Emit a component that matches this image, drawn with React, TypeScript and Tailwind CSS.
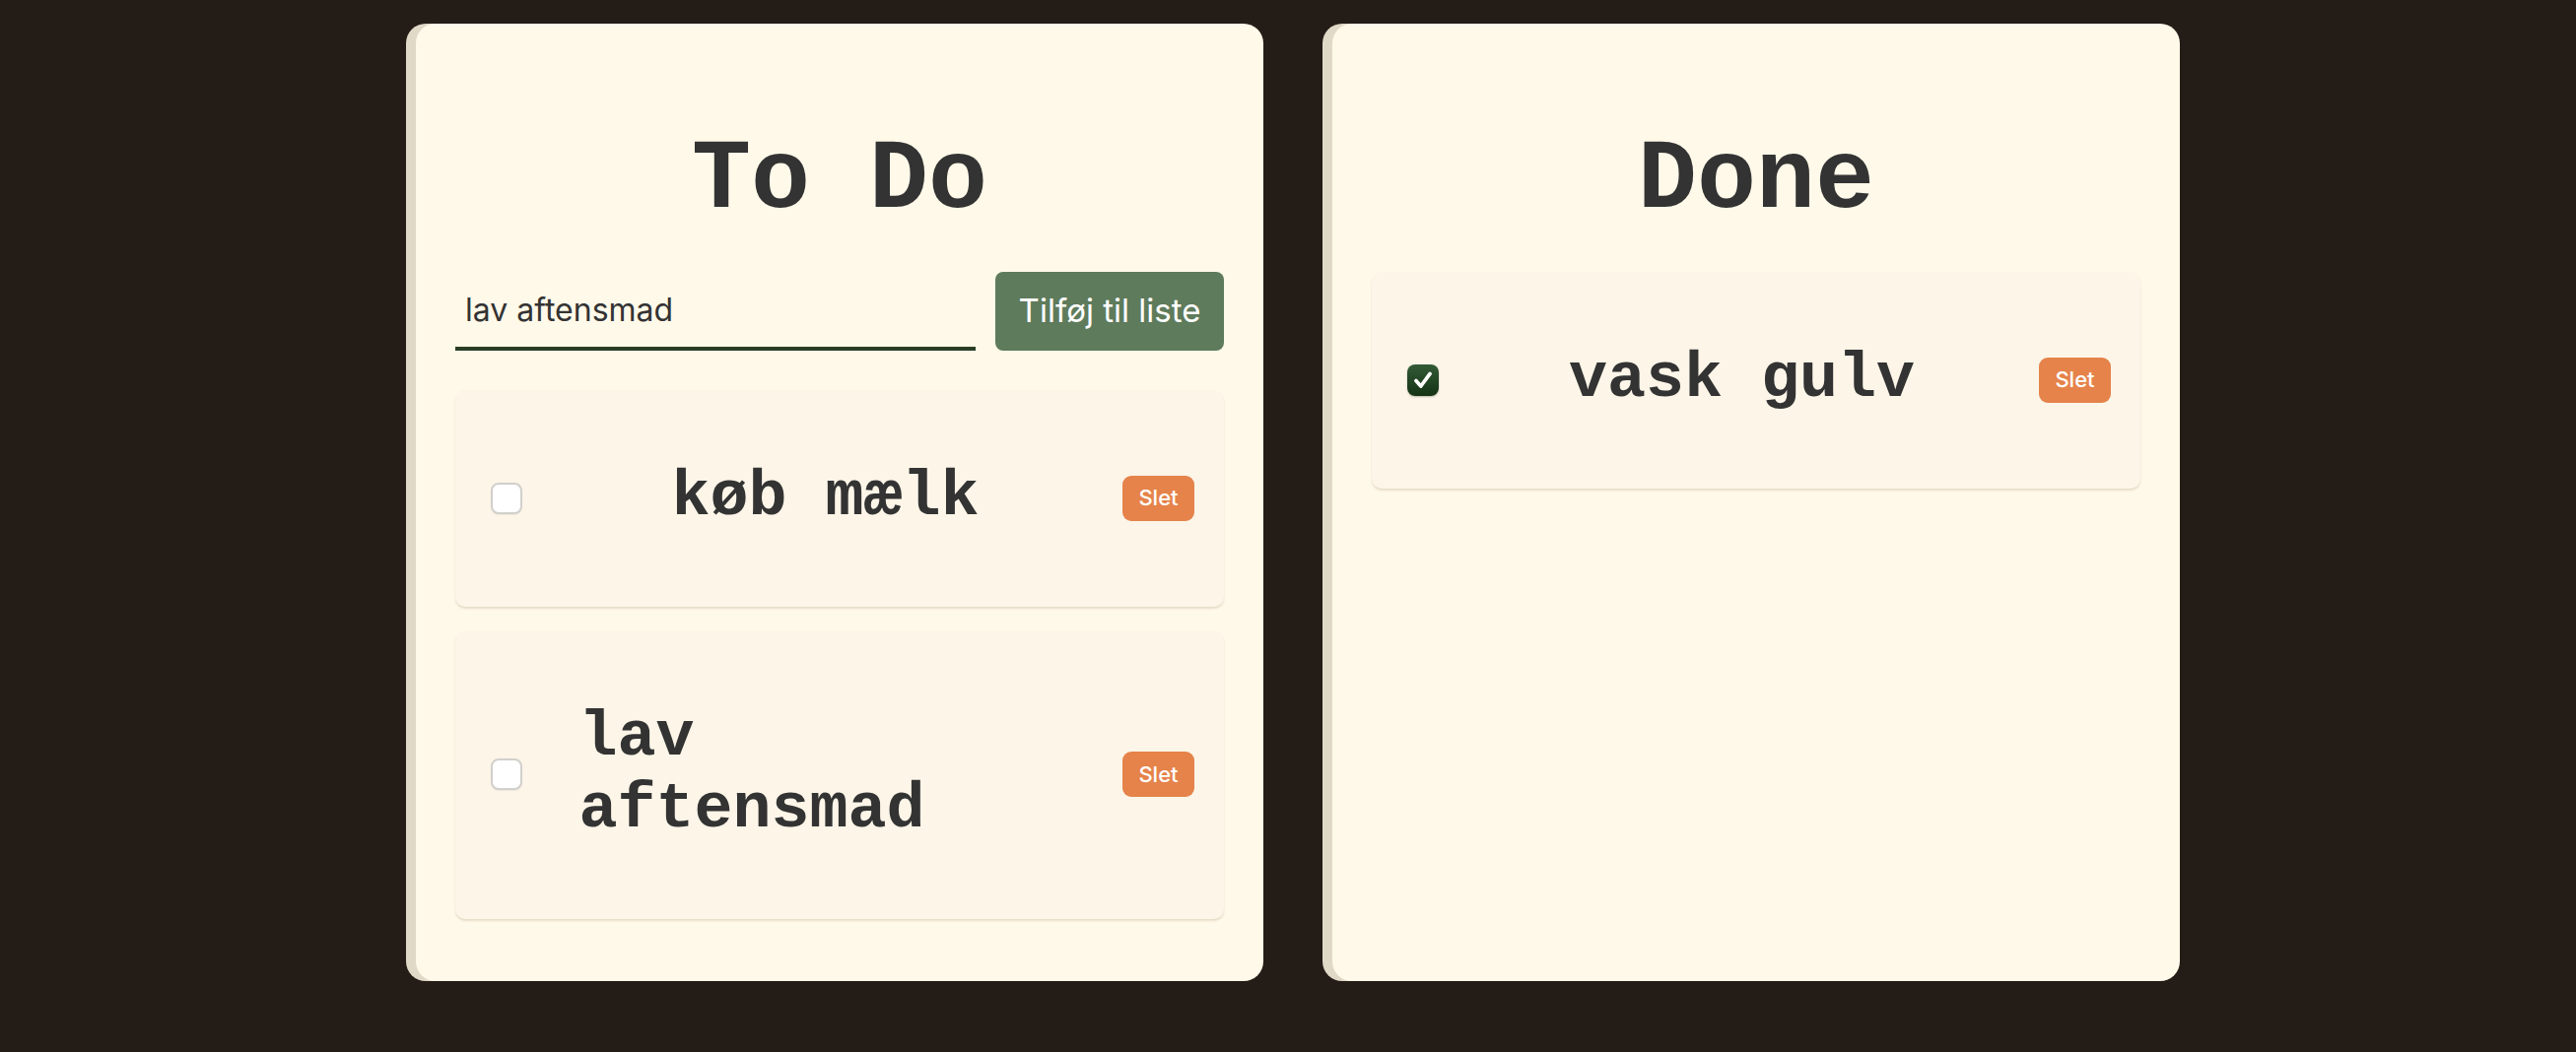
import { useState } from "react";

type Task = { id: number; text: string; done: boolean };

const Checkbox = ({ checked, onChange }: { checked: boolean; onChange: () => void }) => {
  return (
    <button
      onClick={onChange}
      className={`ml-[8px] mr-[6px] flex h-[32px] w-[32px] shrink-0 items-center justify-center rounded-[8px] ${
        checked
          ? "bg-gradient-to-b from-[#335a37] to-[#143414] shadow-[0_1px_2px_rgba(0,0,0,0.25)]"
          : "border-2 border-[#d2d0cc] bg-white shadow-[0_1px_1px_rgba(0,0,0,0.06)]"
      }`}
    >
      {checked && (
        <svg width="24" height="24" viewBox="0 0 22 22" fill="none">
          <path
            d="M4.5 11.5 L9 16.5 L17.5 5"
            stroke="white"
            strokeWidth="3.4"
            strokeLinecap="round"
            strokeLinejoin="round"
          />
        </svg>
      )}
    </button>
  );
};

const TaskItem = ({
  task,
  onToggle,
  onDelete,
}: {
  task: Task;
  onToggle: () => void;
  onDelete: () => void;
}) => {
  return (
    <div className="flex items-center justify-between rounded-[10px] bg-[#fcf5e8] py-[8px] pl-[28px] pr-[30px] shadow-[0_2px_2px_rgba(120,100,60,0.18)]">
      <Checkbox checked={task.done} onChange={onToggle} />
      <p className="my-[65px] max-w-[500px] font-['Courier_New','Liberation_Mono',monospace] text-[65px] font-bold leading-[73.6px] text-[#333333]">
        {task.text}
      </p>
      <button
        onClick={onDelete}
        className="flex h-[46px] w-[73px] shrink-0 items-center justify-center rounded-[9px] bg-[#e5834a] font-['Inter',sans-serif] text-[22px] font-medium text-white"
      >
        Slet
      </button>
    </div>
  );
};

export default function App() {
  const [input, setInput] = useState("lav aftensmad");
  const [tasks, setTasks] = useState<Task[]>([
    { id: 1, text: "køb mælk", done: false },
    { id: 2, text: "lav aftensmad", done: false },
    { id: 3, text: "vask gulv", done: true },
  ]);

  const addTask = () => {
    if (!input.trim()) return;
    setTasks((prev) => [...prev, { id: Date.now(), text: input.trim(), done: false }]);
    setInput("");
  };

  const toggle = (id: number) => {
    setTasks((prev) => prev.map((t) => (t.id === id ? { ...t, done: !t.done } : t)));
  };

  const remove = (id: number) => {
    setTasks((prev) => prev.filter((t) => t.id !== id));
  };

  const todo = tasks.filter((t) => !t.done);
  const done = tasks.filter((t) => t.done);

  const cardClass =
    "flex w-[860px] flex-col rounded-[20px] bg-[#fff9e9] px-[40px] pt-[103px] pb-[63px] shadow-[-10px_0_0_#e0d9c7]";
  const titleClass =
    "mb-[36px] text-center font-['Courier_New','Liberation_Mono',monospace] text-[100px] font-bold leading-[113px] text-[#333333]";

  return (
    <div className="min-h-screen bg-[#241c17] pt-[24px] pl-[20px]">
      <div className="flex justify-center gap-[70px]">
        <div className={cardClass}>
          <h1 className={titleClass}>To Do</h1>
          <div className="mb-[40px] flex gap-[20px]">
            <input
              value={input}
              onChange={(e) => setInput(e.target.value)}
              className="h-[80px] flex-1 border-b-4 border-[#2a3d25] bg-transparent px-[10px] font-['Inter',sans-serif] text-[32px] text-[#333333] outline-none"
            />
            <button
              onClick={addTask}
              className="h-[80px] w-[232px] rounded-[8px] bg-[#5e7b5c] font-['Inter',sans-serif] text-[33px] text-white"
            >
              Tilføj til liste
            </button>
          </div>
          <div className="flex flex-col gap-[24px]">
            {todo.map((t) => (
              <TaskItem key={t.id} task={t} onToggle={() => toggle(t.id)} onDelete={() => remove(t.id)} />
            ))}
          </div>
        </div>

        <div className={cardClass}>
          <h1 className={titleClass}>Done</h1>
          <div className="flex flex-col gap-[24px]">
            {done.map((t) => (
              <TaskItem key={t.id} task={t} onToggle={() => toggle(t.id)} onDelete={() => remove(t.id)} />
            ))}
          </div>
        </div>
      </div>
    </div>
  );
}
